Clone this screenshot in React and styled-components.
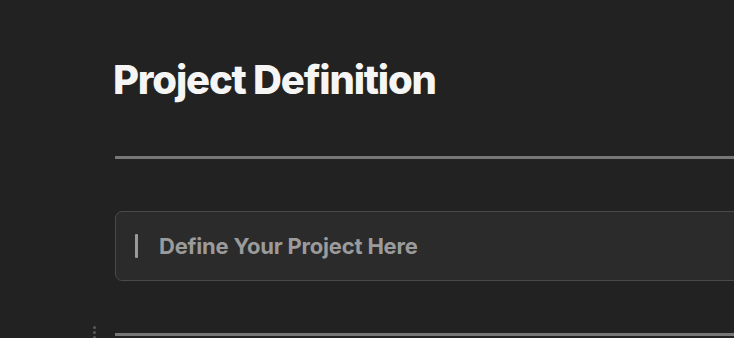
import React from "react";
import styled, { createGlobalStyle } from "styled-components";

const Global = createGlobalStyle`
  html, body { margin: 0; padding: 0; background: #222222; overflow: hidden; }
  body { font-family: Inter, "Noto Sans", sans-serif; }
`;

const Page = styled.div`
  width: 734px;
  height: 338px;
  overflow: hidden;
  background: #222222;
`;

const Content = styled.div`
  width: 900px;
  padding: 56px 0 0 115px;
  display: flex;
  flex-direction: column;
`;

const Title = styled.h1`
  margin: 0 0 0 -2px;
  font-size: 40px;
  line-height: 48px;
  font-weight: 800;
  letter-spacing: -1.2px;
  color: #f5f5f5;
`;

const Rule = styled.div`
  height: 3px;
  background: #777777;
  margin-top: ${(p) => p.$top}px;
`;

const Callout = styled.div`
  margin-top: 52px;
  height: 68px;
  border: 1px solid #4a4a4a;
  border-radius: 7px;
  background: #2b2b2b;
  display: flex;
  align-items: center;
  padding-left: 19px;
  gap: 21px;
`;

const Bar = styled.span`
  width: 3px;
  height: 24px;
  background: #9a9a9a;
  border-radius: 1px;
`;

const CalloutText = styled.span`
  font-size: 22px;
  font-weight: 700;
  color: #9b9b9b;
  letter-spacing: -0.2px;
`;

const BlockRow = styled.div`
  position: relative;
  margin-top: 52px;
`;

const Handle = styled.div`
  position: absolute;
  left: -22px;
  top: -7px;
  display: flex;
  flex-direction: column;
  gap: 2px;
`;

const Dot = styled.span`
  width: 3px;
  height: 3px;
  border-radius: 50%;
  background: #5a5a5a;
`;

export default function App() {
  return (
    <>
      <Global />
      <Page>
        <Content>
          <Title>Project Definition</Title>
          <Rule $top={52} />
          <Callout>
            <Bar />
            <CalloutText>Define Your Project Here</CalloutText>
          </Callout>
          <BlockRow>
            <Handle>
              <Dot />
              <Dot />
              <Dot />
            </Handle>
            <Rule $top={0} />
          </BlockRow>
        </Content>
      </Page>
    </>
  );
}
